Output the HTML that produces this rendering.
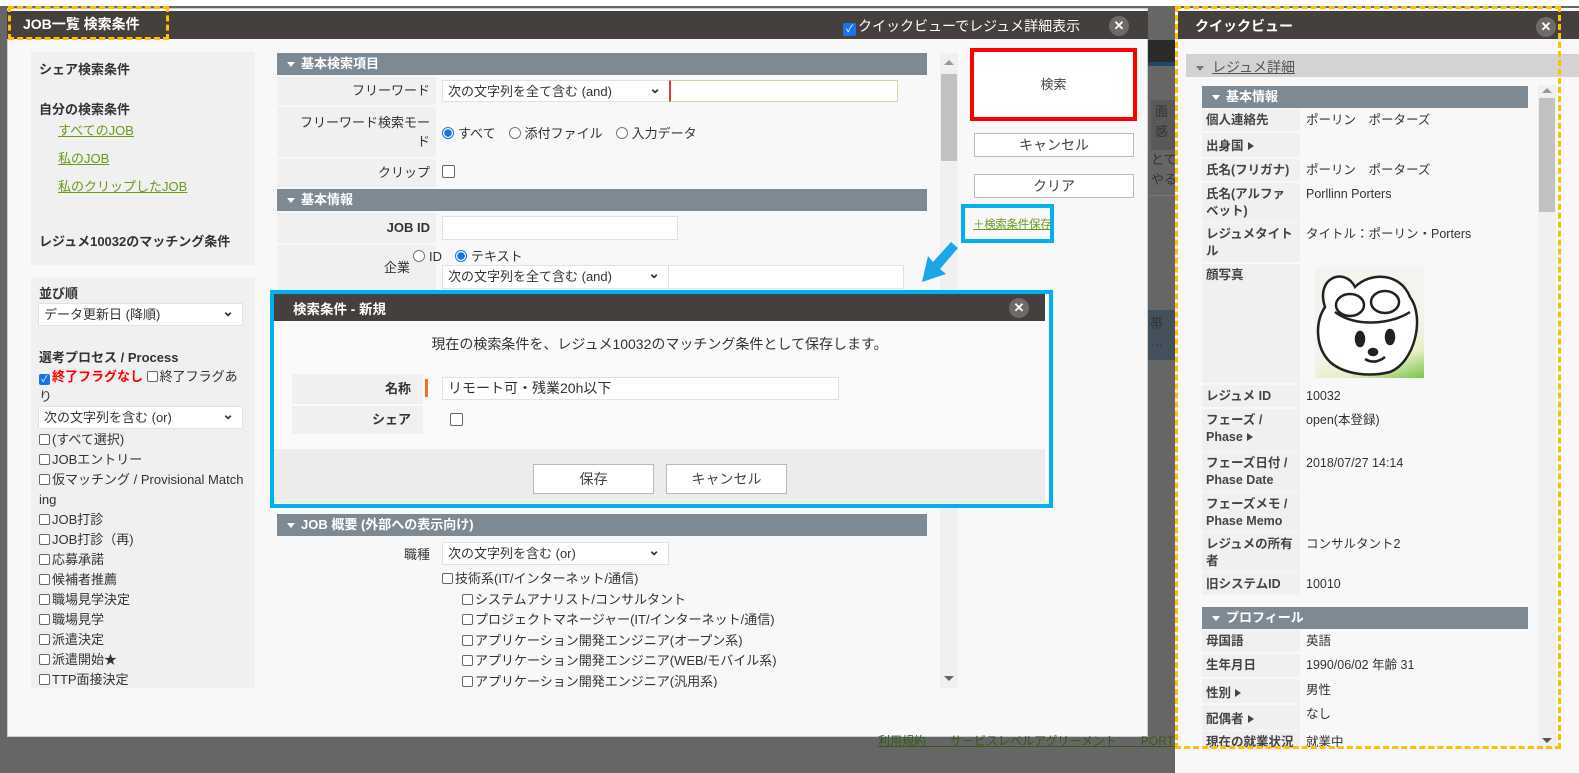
<!DOCTYPE html>
<html><head><meta charset="utf-8">
<style>
*{box-sizing:border-box;margin:0;padding:0}
body{width:1579px;height:773px;position:relative;overflow:hidden;background:#666;font-family:"Liberation Sans","Noto Sans CJK JP",sans-serif;font-size:13px;color:#333}
.a{position:absolute}
.hdr{background:#45403e;color:#fff;font-weight:bold;font-size:14px}
.sec{background:#7d8a94;color:#fff;font-weight:bold;font-size:13px;padding-left:10px;line-height:22px}
.sec:before{content:"";display:inline-block;border-left:4px solid transparent;border-right:4px solid transparent;border-top:5px solid #fff;margin-right:6px;vertical-align:middle}
.lab{background:#f0f0f0;text-align:right;padding-right:6px;font-size:13px}
.inp{background:#fff;border:1px solid #e2e2e2}
.sel{background:#fff;border:1px solid #e2e2e2;padding-left:5px;line-height:22px;font-size:13px;color:#333}
.sel:after{content:"⌄";position:absolute;right:8px;top:-4px;font-weight:bold;font-size:14px}
.cb{display:inline-block;width:11px;height:11px;border:1px solid #666;border-radius:2px;vertical-align:-1px;margin-right:2px;background:#fff}
.rb{display:inline-block;width:12px;height:12px;border:1px solid #777;border-radius:50%;vertical-align:-1px;margin-right:4px;background:#fff}
.rbon{border:1px solid #1a73e8;background:radial-gradient(circle,#1a73e8 0 3.5px,#fff 4px)}
.btn{background:#fff;border:1px solid #bbb;text-align:center;color:#444;font-size:14px}
.lk{color:#6a9a1a;text-decoration:underline}
.xc{width:20px;height:20px;border-radius:50%;background:#6e6a68;color:#fff;text-align:center;line-height:20px;font-size:13px;font-weight:bold}
.ql{background:#f0f0f0;font-weight:bold;font-size:12.5px;padding:3px 4px;line-height:17px;color:#444}
.qv{padding:3px 4px;font-size:12.5px;line-height:17px;color:#333}
.tri{display:inline-block;border-top:4px solid transparent;border-bottom:4px solid transparent;border-left:6px solid #444;margin-left:4px}
</style></head><body>
<div class="a" style="left:0;top:0;width:1579px;height:6px;background:#fff"></div>

<!-- main dialog -->
<div class="a" style="left:7px;top:8px;width:1141px;height:729px;background:#f8f8f8;border:1px solid #ccc"></div>
<div class="a hdr" style="left:7px;top:11px;width:1141px;height:28px"></div>
<div class="a" style="left:8px;top:6px;width:161px;height:34px;border:3px dashed #ffc000;color:#fff;font-weight:bold;font-size:14px;padding:5px 0 0 12px">JOB一覧 検索条件</div>
<div class="a" style="left:843px;top:16px;color:#fff;font-size:14px"><span class="cb" style="background:#1a73e8;border-color:#1a73e8;width:13px;height:13px;color:#fff;font-size:10px;line-height:11px;text-align:center">✓</span>クイックビューでレジュメ詳細表示</div>
<div class="a xc" style="left:1109px;top:16px">✕</div>

<!-- left panel -->
<div class="a" style="left:31px;top:52px;width:224px;height:213px;background:#f0f0f0"></div>
<div class="a" style="left:39px;top:59px;font-weight:bold">シェア検索条件</div>
<div class="a" style="left:39px;top:99px;font-weight:bold">自分の検索条件</div>
<div class="a lk" style="left:58px;top:120px">すべてのJOB</div>
<div class="a lk" style="left:58px;top:148px">私のJOB</div>
<div class="a lk" style="left:58px;top:176px">私のクリップしたJOB</div>
<div class="a" style="left:39px;top:231px;font-weight:bold">レジュメ10032のマッチング条件</div>

<div class="a" style="left:31px;top:277px;width:224px;height:411px;background:#f0f0f0"></div>
<div class="a" style="left:39px;top:283px;font-weight:bold">並び順</div>
<div class="a sel" style="left:38px;top:303px;width:205px;height:23px">データ更新日 (降順)</div>
<div class="a" style="left:39px;top:347px;font-weight:bold">選考プロセス / Process</div>
<div class="a" style="left:39px;top:367px;width:205px;line-height:20px;word-break:break-all"><span class="cb" style="background:#1a73e8;border-color:#1a73e8;color:#fff;font-size:9px;line-height:9px;text-align:center">✓</span><span style="color:#f00;font-weight:bold">終了フラグなし</span> <span class="cb"></span>終了フラグあり</div>
<div class="a sel" style="left:38px;top:406px;width:205px;height:23px">次の文字列を含む (or)</div>
<div class="a" style="left:39px;top:430px;width:205px;line-height:20px;word-break:break-all">
<div><span class="cb"></span>(すべて選択)</div>
<div><span class="cb"></span>JOBエントリー</div>
<div><span class="cb"></span>仮マッチング / Provisional Matching</div>
<div><span class="cb"></span>JOB打診</div>
<div><span class="cb"></span>JOB打診（再)</div>
<div><span class="cb"></span>応募承諾</div>
<div><span class="cb"></span>候補者推薦</div>
<div><span class="cb"></span>職場見学決定</div>
<div><span class="cb"></span>職場見学</div>
<div><span class="cb"></span>派遣決定</div>
<div><span class="cb"></span>派遣開始★</div>
<div><span class="cb"></span>TTP面接決定</div>
</div>
<div class="a" style="left:31px;top:688px;width:224px;height:30px;background:#f8f8f8"></div>

<!-- center form -->
<div class="a" style="left:277px;top:53px;width:650px;height:635px;overflow:hidden">
 <div class="a sec" style="left:0;top:0;width:650px;height:22px">基本検索項目</div>
 <div class="a lab" style="left:0;top:24px;width:159px;height:28px;line-height:28px">フリーワード</div>
 <div class="a sel" style="left:165px;top:27px;width:228px;height:22px">次の文字列を全て含む (and)</div>
 <div class="a inp" style="left:392px;top:27px;width:229px;height:22px;border-color:#c9dba0;border-left:2px solid #e33"></div>
 <div class="a lab" style="left:0;top:54px;width:159px;height:50px;padding-top:6px;line-height:19px">フリーワード検索モー<br>ド</div>
 <div class="a" style="left:165px;top:70px"><span class="rb rbon"></span>すべて　<span class="rb"></span>添付ファイル　<span class="rb"></span>入力データ</div>
 <div class="a lab" style="left:0;top:106px;width:159px;height:28px;line-height:28px">クリップ</div>
 <div class="a" style="left:165px;top:112px"><span class="cb" style="width:13px;height:13px"></span></div>
 <div class="a sec" style="left:0;top:136px;width:650px;height:22px">基本情報</div>
 <div class="a lab" style="left:0;top:160px;width:159px;height:30px;line-height:30px;font-weight:bold">JOB ID</div>
 <div class="a inp" style="left:165px;top:163px;width:236px;height:24px"></div>
 <div class="a lab" style="left:0;top:192px;width:159px;height:80px;padding-top:12px;padding-right:26px">企業</div>
 <div class="a" style="left:136px;top:193px"><span class="rb"></span>ID　<span class="rb rbon"></span>テキスト</div>
 <div class="a sel" style="left:165px;top:212px;width:227px;height:24px">次の文字列を全て含む (and)</div>
 <div class="a inp" style="left:391px;top:212px;width:236px;height:24px"></div>
 <div class="a sec" style="left:0;top:461px;width:650px;height:22px">JOB 概要 (外部への表示向け)</div>
 <div class="a lab" style="left:0;top:485px;width:159px;height:150px;padding-top:6px;background:#f8f8f8">職種</div>
 <div class="a sel" style="left:165px;top:489px;width:227px;height:23px">次の文字列を含む (or)</div>
 <div class="a" style="left:165px;top:516px;line-height:20.5px">
  <div><span class="cb"></span>技術系(IT/インターネット/通信)</div>
  <div style="padding-left:20px"><span class="cb"></span>システムアナリスト/コンサルタント</div>
  <div style="padding-left:20px"><span class="cb"></span>プロジェクトマネージャー(IT/インターネット/通信)</div>
  <div style="padding-left:20px"><span class="cb"></span>アプリケーション開発エンジニア(オープン系)</div>
  <div style="padding-left:20px"><span class="cb"></span>アプリケーション開発エンジニア(WEB/モバイル系)</div>
  <div style="padding-left:20px"><span class="cb"></span>アプリケーション開発エンジニア(汎用系)</div>
 </div>
</div>
<!-- scrollbar -->
<div class="a" style="left:940px;top:53px;width:18px;height:635px;background:#f0f0f0"></div>
<div class="a" style="left:941px;top:74px;width:16px;height:87px;background:#c1c1c1"></div>
<div class="a" style="left:944px;top:60px;border-left:5px solid transparent;border-right:5px solid transparent;border-bottom:5px solid #999"></div>
<div class="a" style="left:944px;top:676px;border-left:5px solid transparent;border-right:5px solid transparent;border-top:5px solid #666"></div>

<!-- right buttons -->
<div class="a" style="left:970px;top:48px;width:167px;height:73px;border:4px solid #f00;background:#fff;text-align:center;line-height:65px;color:#444">検索</div>
<div class="a btn" style="left:974px;top:133px;width:160px;height:24px;line-height:22px">キャンセル</div>
<div class="a btn" style="left:974px;top:174px;width:160px;height:24px;line-height:22px">クリア</div>
<div class="a" style="left:961px;top:204px;width:93px;height:39px;border:4px solid #00b0f0;padding:8px 0 0 8px;white-space:nowrap"><span class="lk" style="font-size:11.5px;letter-spacing:-0.3px">＋検索条件保存</span></div>
<svg class="a" style="left:918px;top:242px" width="44" height="44" viewBox="0 0 44 44"><path d="M40 6 L33 0 L15 20 L10 14 L4 40 L28 32 L22 27 Z" fill="#1aa7e8"/></svg>

<!-- modal -->
<div class="a" style="left:270px;top:290px;width:783px;height:218px;border:4px solid #00b0f0;background:#fafafa"></div>
<div class="a hdr" style="left:274px;top:294px;width:771px;height:27px;font-size:13.5px;padding:4px 0 0 19px">検索条件 - 新規</div>
<div class="a xc" style="left:1009px;top:298px">✕</div>
<div class="a" style="left:274px;top:334px;width:771px;text-align:center;font-size:14px">現在の検索条件を、レジュメ10032のマッチング条件として保存します。</div>
<div class="a lab" style="left:292px;top:374px;width:131px;height:30px;line-height:30px;font-weight:bold;padding-right:12px">名称</div>
<div class="a" style="left:425px;top:379px;width:3px;height:18px;background:#f36f21"></div>
<div class="a inp" style="left:442px;top:377px;width:397px;height:23px;padding-left:5px;line-height:21px;font-size:14px">リモート可・残業20h以下</div>
<div class="a lab" style="left:292px;top:406px;width:131px;height:28px;line-height:28px;font-weight:bold;padding-right:12px">シェア</div>
<div class="a" style="left:450px;top:413px"><span class="cb" style="width:13px;height:13px"></span></div>
<div class="a" style="left:274px;top:449px;width:771px;height:54px;background:#ececec"></div>
<div class="a btn" style="left:533px;top:464px;width:121px;height:30px;line-height:28px">保存</div>
<div class="a btn" style="left:666px;top:464px;width:121px;height:30px;line-height:28px">キャンセル</div>

<!-- background page strip -->
<div class="a" style="left:1148px;top:40px;width:30px;height:22px;background:#2a2a2a"></div>
<div class="a" style="left:1148px;top:62px;width:30px;height:4px;background:#23446b"></div>
<div class="a" style="left:1151px;top:100px;width:27px;height:50px;background:#595959;color:#333;font-size:13px;line-height:20px;padding:2px 0 0 4px">面<br>感</div>
<div class="a" style="left:1151px;top:150px;color:#333;font-size:13px;line-height:20px">とて<br>やる</div>
<div class="a" style="left:1148px;top:195px;width:30px;height:1px;background:#777"></div>
<div class="a" style="left:1148px;top:310px;width:30px;height:50px;background:#44505c;color:#333;padding:5px 0 0 2px;line-height:18px">帯<br>…</div>
<div class="a" style="left:878px;top:732px;color:#355a1a;font-size:12px;text-decoration:underline">利用規約　　サービスレベルアグリーメント　　PORTERSに</div>

<!-- quick view -->
<div class="a" style="left:1175px;top:8px;width:404px;height:765px;background:#f8f8f8"></div>
<div class="a hdr" style="left:1178px;top:11px;width:401px;height:28px;padding:5px 0 0 17px">クイックビュー</div>
<div class="a xc" style="left:1536px;top:17px">✕</div>
<div class="a" style="left:1186px;top:54px;width:393px;height:23px;background:#d3d3d3;padding:3px 0 0 10px;color:#555;font-size:14px"><span style="display:inline-block;border-left:4px solid transparent;border-right:4px solid transparent;border-top:5px solid #777;margin-right:8px;vertical-align:middle"></span><span style="text-decoration:underline">レジュメ詳細</span></div>
<div class="a" style="left:1538px;top:85px;width:18px;height:665px;background:#f0f0f0"></div>
<div class="a" style="left:1539px;top:98px;width:16px;height:114px;background:#c1c1c1"></div>
<div class="a" style="left:1542px;top:88px;border-left:5px solid transparent;border-right:5px solid transparent;border-bottom:5px solid #999"></div>
<div class="a" style="left:1542px;top:738px;border-left:5px solid transparent;border-right:5px solid transparent;border-top:5px solid #555"></div>
<div class="a" style="left:1202px;top:86px;width:326px;height:664px;overflow:hidden">
 <div class="a sec" style="left:0;top:0;width:326px;height:22px">基本情報</div>
 <div class="a ql" style="left:0;top:23px;width:98px;height:22px">個人連絡先</div><div class="a qv" style="left:100px;top:23px">ポーリン　ポーターズ</div>
 <div class="a ql" style="left:0;top:47px;width:98px;height:24px;padding-top:5px">出身国<span class="tri"></span></div>
 <div class="a ql" style="left:0;top:73px;width:98px;height:22px">氏名(フリガナ)</div><div class="a qv" style="left:100px;top:73px">ポーリン　ポーターズ</div>
 <div class="a ql" style="left:0;top:97px;width:98px;height:39px">氏名(アルファベット)</div><div class="a qv" style="left:100px;top:97px">Porllinn Porters</div>
 <div class="a ql" style="left:0;top:137px;width:98px;height:39px">レジュメタイトル</div><div class="a qv" style="left:100px;top:137px">タイトル：ポーリン・Porters</div>
 <div class="a ql" style="left:0;top:178px;width:98px;height:119px">顔写真</div>
 <div class="a" style="left:113px;top:181px;width:109px;height:111px;background:linear-gradient(160deg,#f4f4ee 60%,#e8efc8 80%,#7cc24a 100%);overflow:hidden">
  <svg width="109" height="111" viewBox="0 0 109 111"><g fill="none" stroke="#222" stroke-width="2.5"><path d="M10 40 C0 10 30 0 40 20 C55 5 85 5 95 30 C110 50 100 95 75 105 C55 110 30 108 15 95 C0 80 0 55 10 40Z" fill="#fff"/><ellipse cx="35" cy="38" rx="14" ry="11"/><ellipse cx="70" cy="35" rx="14" ry="11"/><path d="M20 45 C40 60 75 58 95 45"/><ellipse cx="45" cy="72" rx="4" ry="7" fill="#222"/><ellipse cx="75" cy="70" rx="4" ry="7" fill="#222"/><path d="M50 92 Q60 98 70 90"/><ellipse cx="58" cy="85" rx="4" ry="3" fill="#222"/></g></svg>
 </div>
 <div class="a ql" style="left:0;top:299px;width:98px;height:22px">レジュメ ID</div><div class="a qv" style="left:100px;top:299px">10032</div>
 <div class="a ql" style="left:0;top:323px;width:98px;height:42px">フェーズ /<br>Phase<span class="tri"></span></div><div class="a qv" style="left:100px;top:323px">open(本登録)</div>
 <div class="a ql" style="left:0;top:366px;width:98px;height:40px">フェーズ日付 / Phase Date</div><div class="a qv" style="left:100px;top:366px">2018/07/27 14:14</div>
 <div class="a ql" style="left:0;top:407px;width:98px;height:39px">フェーズメモ / Phase Memo</div>
 <div class="a ql" style="left:0;top:447px;width:98px;height:39px">レジュメの所有者</div><div class="a qv" style="left:100px;top:447px">コンサルタント2</div>
 <div class="a ql" style="left:0;top:487px;width:98px;height:22px">旧システムID</div><div class="a qv" style="left:100px;top:487px">10010</div>
 <div class="a sec" style="left:0;top:521px;width:326px;height:22px">プロフィール</div>
 <div class="a ql" style="left:0;top:544px;width:98px;height:22px">母国語</div><div class="a qv" style="left:100px;top:544px">英語</div>
 <div class="a ql" style="left:0;top:568px;width:98px;height:23px">生年月日</div><div class="a qv" style="left:100px;top:568px">1990/06/02 年齢 31</div>
 <div class="a ql" style="left:0;top:593px;width:98px;height:24px;padding-top:6px">性別<span class="tri"></span></div><div class="a qv" style="left:100px;top:593px">男性</div>
 <div class="a ql" style="left:0;top:619px;width:98px;height:25px;padding-top:6px">配偶者<span class="tri"></span></div><div class="a qv" style="left:100px;top:617px">なし</div>
 <div class="a ql" style="left:0;top:645px;width:98px;height:22px">現在の就業状況</div><div class="a qv" style="left:100px;top:645px">就業中</div>
</div>
<div class="a" style="left:1175px;top:6px;width:386px;height:743px;border:3px dashed #ffc000"></div>
</body></html>
